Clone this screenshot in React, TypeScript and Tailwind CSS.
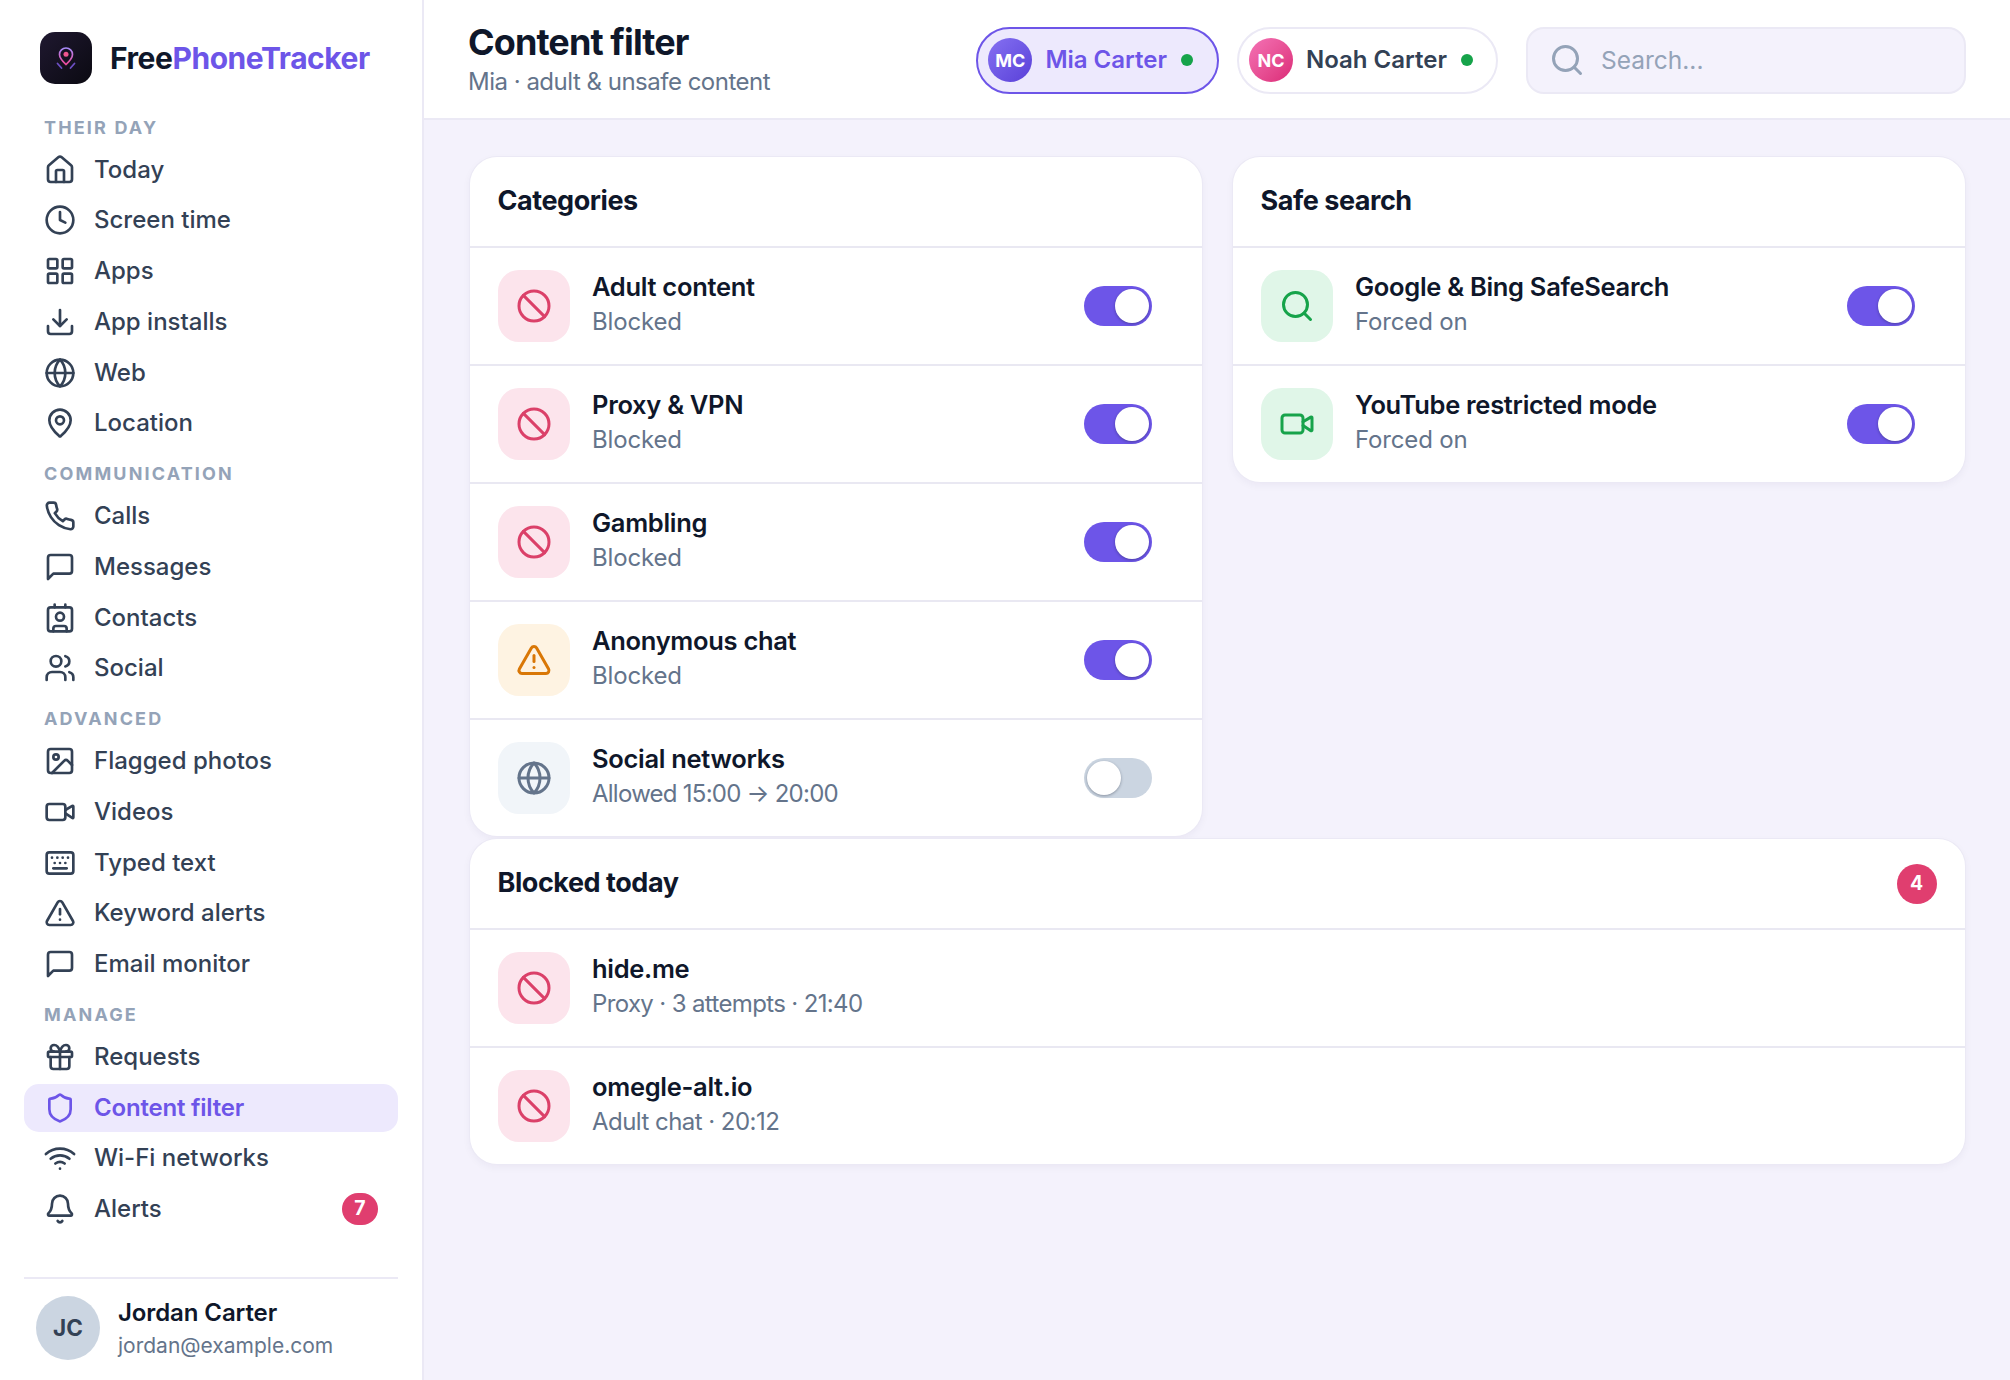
import React from "react";
import { House, Clock, LayoutGrid, Download, Globe, MapPin, Contact, Users, Image, Video, Keyboard, TriangleAlert, Gift, Shield, Bell, Ban, Search } from "lucide-react";

type IconProps = { size?: number; strokeWidth?: number; className?: string };

function Base({ size = 32, strokeWidth = 2, className = "", children }: IconProps & { children: React.ReactNode }) {
  return (
    <svg width={size} height={size} viewBox="0 0 24 24" fill="none" stroke="currentColor" strokeWidth={strokeWidth} strokeLinecap="round" strokeLinejoin="round" className={className}>
      {children}
    </svg>
  );
}

function MessageOld(p: IconProps) {
  return <Base {...p}><path d="M21 15a2 2 0 0 1-2 2H7l-4 4V5a2 2 0 0 1 2-2h14a2 2 0 0 1 2 2z" /></Base>;
}
function PhoneOld(p: IconProps) {
  return <Base {...p}><path d="M22 16.92v3a2 2 0 0 1-2.18 2 19.79 19.79 0 0 1-8.63-3.07 19.5 19.5 0 0 1-6-6 19.79 19.79 0 0 1-3.07-8.67A2 2 0 0 1 4.11 2h3a2 2 0 0 1 2 1.72 12.84 12.84 0 0 0 .7 2.81 2 2 0 0 1-.45 2.11L8.09 9.91a16 16 0 0 0 6 6l1.27-1.27a2 2 0 0 1 2.11-.45 12.84 12.84 0 0 0 2.81.7A2 2 0 0 1 22 16.92z" /></Base>;
}
function WifiOld(p: IconProps) {
  return <Base {...p}><path d="M5 12.55a11 11 0 0 1 14.08 0" /><path d="M1.42 9a16 16 0 0 1 21.16 0" /><path d="M8.53 16.11a6 6 0 0 1 6.95 0" /><path d="M12 20h.01" /></Base>;
}

const sections = [
  { label: "THEIR DAY", items: [["Today", House], ["Screen time", Clock], ["Apps", LayoutGrid], ["App installs", Download], ["Web", Globe], ["Location", MapPin]] },
  { label: "COMMUNICATION", items: [["Calls", PhoneOld], ["Messages", MessageOld], ["Contacts", Contact], ["Social", Users]] },
  { label: "ADVANCED", items: [["Flagged photos", Image], ["Videos", Video], ["Typed text", Keyboard], ["Keyword alerts", TriangleAlert], ["Email monitor", MessageOld]] },
  { label: "MANAGE", items: [["Requests", Gift], ["Content filter", Shield], ["Wi-Fi networks", WifiOld], ["Alerts", Bell]] },
] as const;

function Logo() {
  return (
    <div className="flex h-[52px] w-[52px] shrink-0 items-center justify-center rounded-[15px] bg-gradient-to-br from-[#1f1830] to-[#0b0a12]">
      <svg width="30" height="30" viewBox="0 0 30 30" fill="none">
        <defs>
          <linearGradient id="pin" x1="0" y1="0" x2="0" y2="1">
            <stop offset="0" stopColor="#a78bfa" />
            <stop offset="1" stopColor="#ec4899" />
          </linearGradient>
        </defs>
        <path d="M15 21.5c-3-2.8-6.5-6-6.5-10a6.5 6.5 0 0 1 13 0c0 4-3.5 7.2-6.5 10z" stroke="url(#pin)" strokeWidth="1.7" />
        <circle cx="15" cy="11.3" r="2.5" fill="#f0568f" />
        <path d="M6.5 20.5 10.5 25M23.5 20.5 19.5 25" stroke="#6d4fc4" strokeWidth="1.8" strokeLinecap="round" />
      </svg>
    </div>
  );
}

function Sidebar() {
  return (
    <aside className="flex h-[1380px] w-[424px] shrink-0 flex-col border-r-2 border-[#ebe9f5] bg-white">
      <div className="flex h-[117px] items-start gap-[18px] pl-[40px] pt-[32px]">
        <Logo />
        <div className="flex h-[52px] items-center text-[30px] font-bold tracking-[-0.45px]">
          <span className="text-[#0f172a]">Free</span>
          <span className="text-[#6d55e8]">PhoneTracker</span>
        </div>
      </div>
      <nav className="flex flex-1 flex-col px-[24px]">
        {sections.map((s, si) => (
          <div key={s.label} className={si ? "mt-[16.25px]" : ""}>
            <div className="mb-[8.5px] flex h-[20px] items-center pl-[20px] text-[18px] font-bold tracking-[2.15px] text-[#94a3b8]">{s.label}</div>
            <div className="flex flex-col gap-[2.75px]">
              {s.items.map(([name, Icon]) => {
                const active = name === "Content filter";
                return (
                  <div key={name} className={`flex h-[48px] items-center gap-[18px] rounded-[15px] pl-[20px] pr-[20px] text-[24px] ${active ? "bg-[#ede9fd] font-semibold tracking-[-0.2px] text-[#6d55e8]" : "font-medium text-[#334155]"}`}>
                    <Icon size={32} strokeWidth={2} className="shrink-0" />
                    <span className="flex-1">{name}</span>
                    {name === "Alerts" && (
                      <span className="flex h-[32px] w-[36px] items-center justify-center rounded-full bg-[#e03e6f] text-[19.5px] font-bold text-white">7</span>
                    )}
                  </div>
                );
              })}
            </div>
          </div>
        ))}
      </nav>
      <div className="mx-[24px] flex h-[103px] items-start gap-[18px] border-t-2 border-[#ebe9f5] pl-[12px] pt-[17px]">
        <div className="flex h-[64px] w-[64px] items-center justify-center rounded-full bg-[#cbd5e1] text-[22.5px] font-bold text-[#334155]">JC</div>
        <div>
          <div className="text-[24px] font-semibold leading-[33px] tracking-[-0.1px] text-[#0f172a]">Jordan Carter</div>
          <div className="text-[21px] leading-[33px] text-[#64748b]">jordan@example.com</div>
        </div>
      </div>
    </aside>
  );
}

function Pill({ initials, name, active, avatar }: { initials: string; name: string; active?: boolean; avatar: string }) {
  return (
    <div className={`mt-[2px] flex h-[67px] items-center gap-[13px] rounded-full border-2 pl-[10px] ${active ? "border-[#6d55e8] bg-[#ede9fd] pr-[24px]" : "border-[#ebe9f5] bg-white pr-[23px]"}`}>
      <div className={`flex h-[44px] w-[44px] items-center justify-center rounded-full text-[18px] font-bold text-white ${avatar}`}>{initials}</div>
      <span className={`text-[24px] font-semibold ${active ? "text-[#6d55e8]" : "text-[#334155]"}`}>{name}</span>
      <span className="ml-[1px] h-[12px] w-[12px] rounded-full bg-[#16a34a]" />
    </div>
  );
}

function Toggle({ on }: { on: boolean }) {
  return (
    <div className={`mr-[21px] flex h-[40px] w-[68px] shrink-0 items-center rounded-full px-[3px] ${on ? "justify-end bg-[#6d55e8]" : "justify-start bg-[#cbd5e1]"}`}>
      <div className="h-[34px] w-[34px] rounded-full bg-white shadow-[0_1px_3px_rgba(15,23,42,0.35)]" />
    </div>
  );
}

const tones = {
  red: "bg-[#fce4ec] text-[#db4069]",
  amber: "bg-[#fef3e2] text-[#d97706]",
  gray: "bg-[#f1f5f9] text-[#64748b]",
  green: "bg-[#e0f6e8] text-[#16a34a]",
};

function Row({ Icon, tone, title, sub, on, subClass = "tracking-[-0.15px]" }: { Icon: React.ElementType; tone: keyof typeof tones; title: string; sub: string; on?: boolean; subClass?: string }) {
  return (
    <div className="flex h-[118px] items-center gap-[22px] border-t-2 border-[#e9e8f2] px-[28.5px]">
      <div className={`flex h-[72px] w-[72px] shrink-0 items-center justify-center rounded-[21px] ${tones[tone]}`}>
        <Icon size={36} strokeWidth={2} />
      </div>
      <div className="mb-[2px] min-w-0 flex-1">
        <div className="text-[25.5px] font-semibold leading-[32px] tracking-[-0.3px] text-[#0f172a]">{title}</div>
        <div className={`mt-[2px] text-[24px] leading-[34px] text-[#64748b] ${subClass}`}>{sub}</div>
      </div>
      {on !== undefined && <Toggle on={on} />}
    </div>
  );
}

function Card({ title, badge, children, className = "" }: { title: string; badge?: string; children: React.ReactNode; className?: string }) {
  return (
    <section className={`overflow-hidden rounded-[27px] bg-white shadow-[0_0_0_1px_#ebe9f5,0_3px_9px_rgba(30,20,80,0.05)] ${className}`}>
      <div className="flex h-[89px] items-center justify-between pl-[28px] pr-[28px]">
        <h2 className="text-[27px] font-bold tracking-[-0.45px] text-[#0f172a]">{title}</h2>
        {badge && <span className="flex h-[40px] w-[40px] items-center justify-center rounded-full bg-[#e03e6f] text-[19.5px] font-bold text-white">{badge}</span>}
      </div>
      {children}
    </section>
  );
}

export default function App() {
  return (
    <div className="flex h-[1380px] w-[2010px] overflow-hidden bg-[#f4f2fc] font-['Inter',sans-serif]">
      <Sidebar />
      <main className="flex min-w-0 flex-1 flex-col">
        <header className="flex h-[120px] shrink-0 items-center border-b-2 border-[#ebe9f5] bg-white pl-[44px] pr-[44px]">
          <div className="flex-1">
            <h1 className="text-[36px] font-bold leading-[42px] tracking-[-0.9px] text-[#0f172a]">Content filter</h1>
            <p className="mt-[4px] text-[24px] leading-[30px] tracking-[-0.5px] text-[#64748b]">Mia · adult &amp; unsafe content</p>
          </div>
          <Pill initials="MC" name="Mia Carter" active avatar="bg-gradient-to-br from-[#8670f2] to-[#5a3fd8]" />
          <div className="w-[18px]" />
          <Pill initials="NC" name="Noah Carter" avatar="bg-gradient-to-br from-[#f472b6] to-[#db2777]" />
          <div className="ml-[28px] mt-[2px] flex h-[67px] w-[440px] items-center gap-[16px] rounded-[18px] border-2 border-[#ebe9f5] bg-[#f4f2fc] px-[21px] text-[24.5px] text-[#94a3b8]">
            <Search size={36} strokeWidth={2} className="shrink-0" />
            <span>Search...</span>
          </div>
        </header>
        <div className="grid grid-cols-2 items-start gap-x-[31px] gap-y-[3px] pl-[45.5px] pr-[45.5px] pt-[37px]">
          <Card title="Categories">
            <Row Icon={Ban} tone="red" title="Adult content" sub="Blocked" on />
            <Row Icon={Ban} tone="red" title="Proxy & VPN" sub="Blocked" on />
            <Row Icon={Ban} tone="red" title="Gambling" sub="Blocked" on />
            <Row Icon={TriangleAlert} tone="amber" title="Anonymous chat" sub="Blocked" on />
            <Row Icon={Globe} tone="gray" title="Social networks" sub="Allowed 15:00 → 20:00" on={false} subClass="tracking-[-0.75px]" />
          </Card>
          <Card title="Safe search">
            <Row Icon={Search} tone="green" title="Google & Bing SafeSearch" sub="Forced on" on />
            <Row Icon={Video} tone="green" title="YouTube restricted mode" sub="Forced on" on />
          </Card>
          <Card title="Blocked today" badge="4" className="col-span-2">
            <Row Icon={Ban} tone="red" title="hide.me" sub="Proxy · 3 attempts · 21:40" subClass="tracking-[-0.64px]" />
            <Row Icon={Ban} tone="red" title="omegle-alt.io" sub="Adult chat · 20:12" subClass="tracking-[-0.54px]" />
          </Card>
        </div>
      </main>
    </div>
  );
}
